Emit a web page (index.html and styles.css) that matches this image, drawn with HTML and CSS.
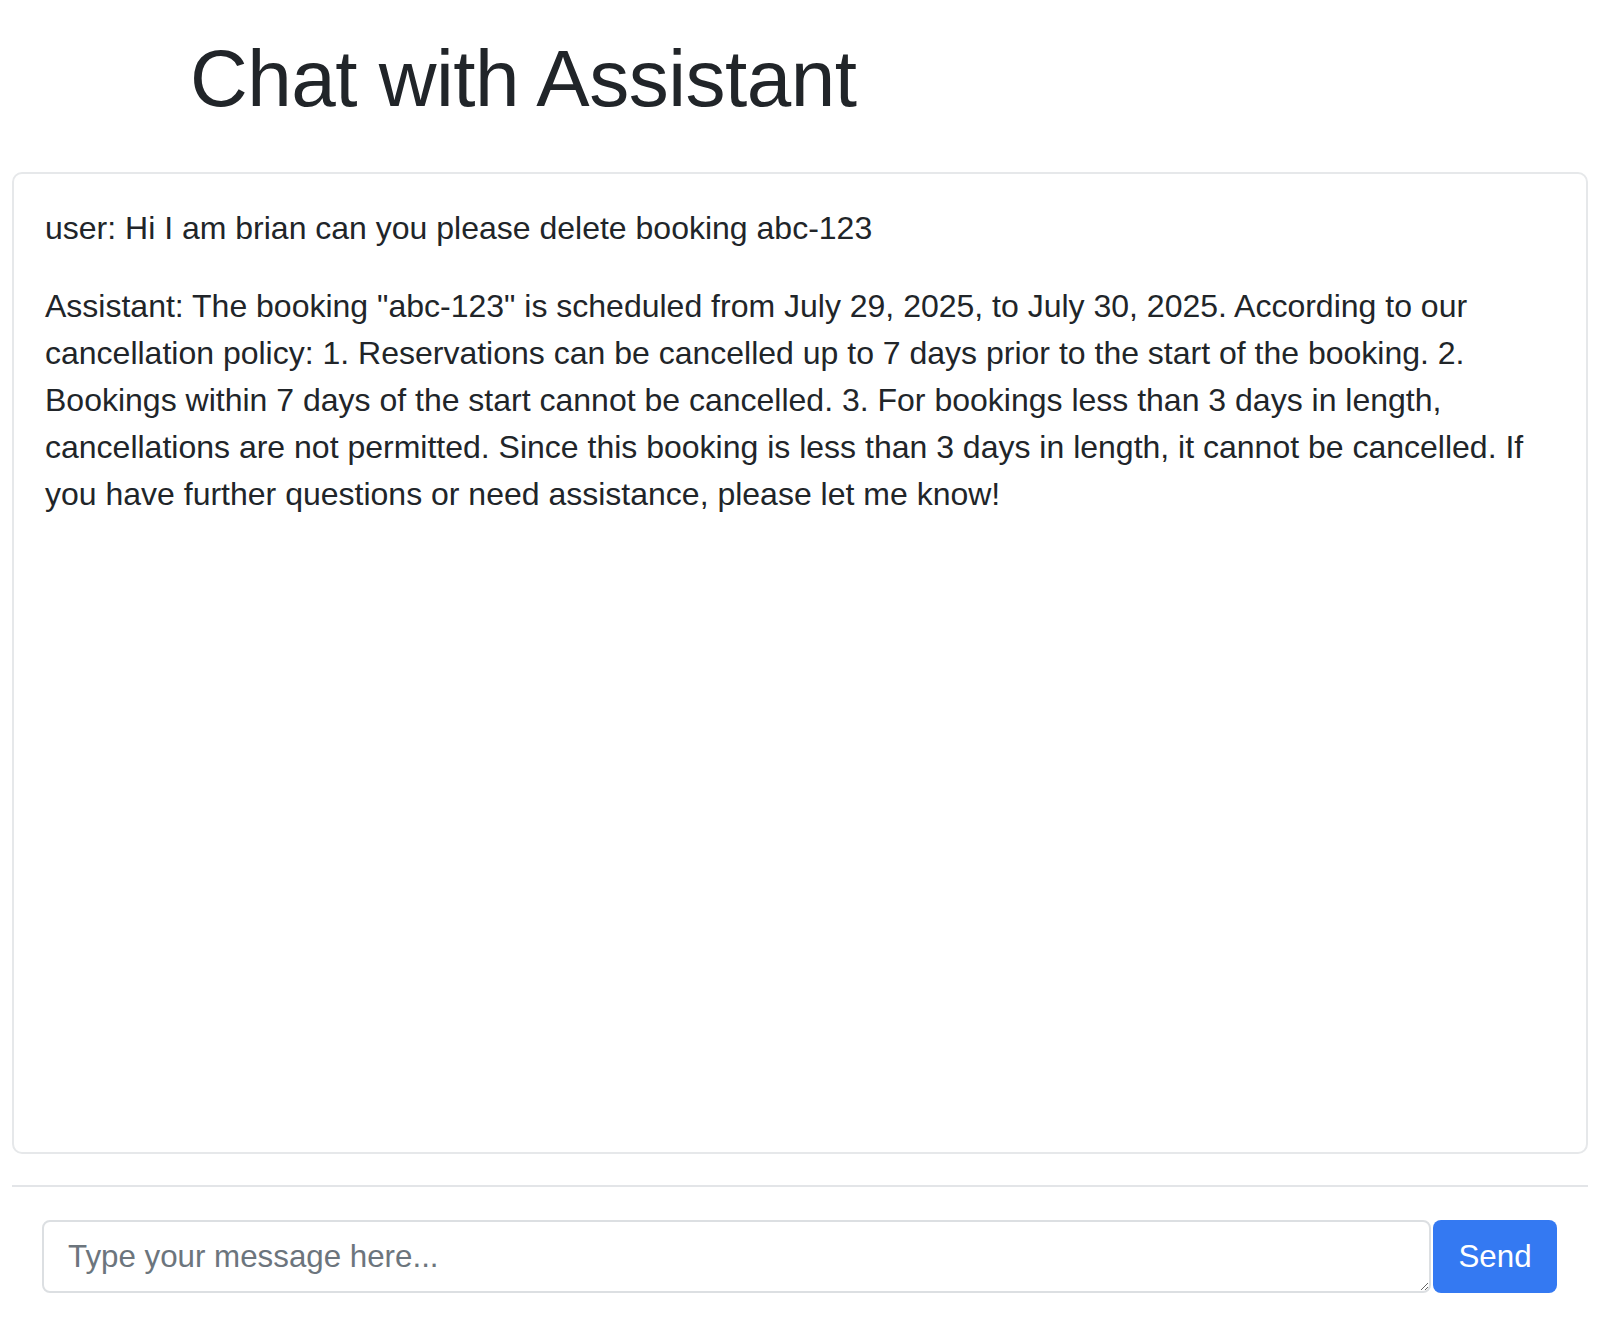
FILE: index.html
```html
<!DOCTYPE html>
<html lang="en">
<head>
	<meta charset="UTF-8">
	<title>Chat with Assistant</title>
	<link rel="stylesheet" href="styles.css">
</head>
<body>
	<div class="page">
		<h1 class="title">Chat with Assistant</h1>
		<div class="chatBox">
			<p>user: Hi I am brian can you please delete booking abc-123</p>
			<p>Assistant: The booking "abc-123" is scheduled from July 29, 2025, to July 30, 2025. According to our cancellation policy: 1. Reservations can be cancelled up to 7 days prior to the start of the booking. 2. Bookings within 7 days of the start cannot be cancelled. 3. For bookings less than 3 days in length, cancellations are not permitted. Since this booking is less than 3 days in length, it cannot be cancelled. If you have further questions or need assistance, please let me know!</p>
		</div>
		<hr class="line">
		<div class="sendRow">
			<textarea class="msgInput" rows="1" placeholder="Type your message here..."></textarea>
			<button class="sendBtn">Send</button>
		</div>
	</div>
</body>
</html>
```

FILE: styles.css
```css
html {
	height: 100%;
}
body {
	margin: 0;
	background: #fff;
	color: #212529;
	font-family: "Liberation Sans", Arial, sans-serif;
}
.page {
	margin: 0 12px;
}
.title {
	font-size: 80px;
	font-weight: 500;
	line-height: 96px;
	letter-spacing: -0.5px;
	margin: 31px 0 45px 178px;
}
.chatBox {
	height: 916px;
	border: 2px solid #e6e8ea;
	border-radius: 10px;
	padding: 31px;
	font-size: 32px;
	line-height: 47px;
}
.chatBox p {
	margin: 0 0 31px;
}
.line {
	border: 0;
	border-top: 2px solid #e3e5e8;
	margin: 31px 0 33px;
}
.sendRow {
	display: flex;
	padding: 0 31px 0 30px;
	gap: 2px;
}
.msgInput {
	flex: 1;
	height: 73px;
	box-sizing: border-box;
	border: 2px solid #dcdfe2;
	border-radius: 8px;
	padding: 14px 24px;
	font-family: "Liberation Sans", Arial, sans-serif;
	font-size: 31.3px;
	line-height: 41px;
	color: #212529;
	resize: vertical;
}
.msgInput::placeholder {
	color: #6c757d;
}
.sendBtn {
	width: 124px;
	height: 73px;
	border: 0;
	border-radius: 8px;
	background: #3479f2;
	color: #fff;
	font-family: "Liberation Sans", Arial, sans-serif;
	font-size: 31.3px;
}
```
